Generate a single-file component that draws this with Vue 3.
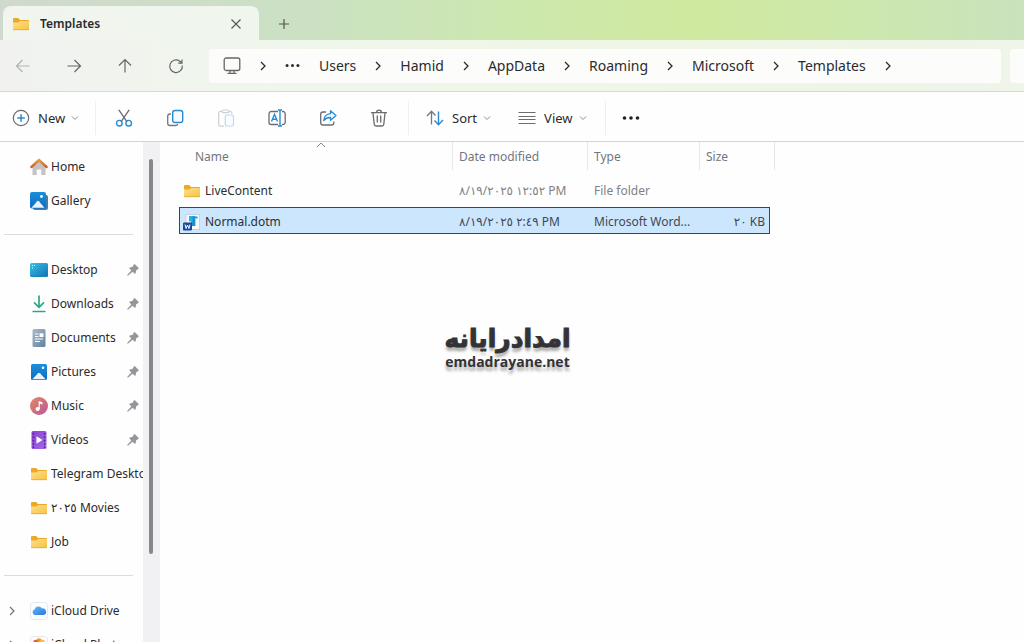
<script setup>
import { ref } from 'vue'

const crumbs = ['Users', 'Hamid', 'AppData', 'Roaming', 'Microsoft', 'Templates']

const groups = [
  [
    { name: 'Home', icon: 'home' },
    { name: 'Gallery', icon: 'gallery' },
  ],
  [
    { name: 'Desktop', icon: 'desktop', pinned: true },
    { name: 'Downloads', icon: 'downloads', pinned: true },
    { name: 'Documents', icon: 'documents', pinned: true },
    { name: 'Pictures', icon: 'pictures', pinned: true },
    { name: 'Music', icon: 'music', pinned: true },
    { name: 'Videos', icon: 'videos', pinned: true },
    { name: 'Telegram Desktop', icon: 'folder' },
    { name: '٢٠٢٥ Movies', icon: 'folder' },
    { name: 'Job', icon: 'folder' },
  ],
  [
    { name: 'iCloud Drive', icon: 'icloud', expandable: true },
    { name: 'iCloud Photos', icon: 'photos', expandable: true },
  ],
]

const files = [
  { name: 'LiveContent', icon: 'folder', date: '٨/١٩/٢٠٢٥ ١٢:٥٢ PM', type: 'File folder', size: '' },
  { name: 'Normal.dotm', icon: 'word', date: '٨/١٩/٢٠٢٥ ٢:٤٩ PM', type: 'Microsoft Word...', size: '٢٠ KB' },
]

const actions = [
  { name: 'Cut', icon: 'cut' },
  { name: 'Copy', icon: 'copy' },
  { name: 'Paste', icon: 'paste', disabled: true },
  { name: 'Rename', icon: 'rename' },
  { name: 'Share', icon: 'share' },
  { name: 'Delete', icon: 'delete' },
]

const selected = ref('Normal.dotm')
</script>

<template>
  <div class="window">
    <svg class="sprite" aria-hidden="true">
      <defs>
        <linearGradient id="g-folder" x1="0" y1="0" x2="1" y2="1">
          <stop offset="0" stop-color="#ffe08a" /><stop offset="1" stop-color="#f6c243" />
        </linearGradient>
        <linearGradient id="g-blue" x1="0" y1="0" x2="0" y2="1">
          <stop offset="0" stop-color="#1b8fdc" /><stop offset="1" stop-color="#0f6cbd" />
        </linearGradient>
        <linearGradient id="g-desk" x1="0" y1="0" x2="1" y2="1">
          <stop offset="0" stop-color="#35c3e0" /><stop offset="1" stop-color="#1270bb" />
        </linearGradient>
        <linearGradient id="g-doc" x1="0" y1="0" x2="1" y2="1">
          <stop offset="0" stop-color="#a9bccd" /><stop offset="1" stop-color="#64809e" />
        </linearGradient>
        <linearGradient id="g-music" x1="0" y1="0" x2="1" y2="1">
          <stop offset="0" stop-color="#e5885f" /><stop offset="1" stop-color="#b9579b" />
        </linearGradient>
        <linearGradient id="g-video" x1="0" y1="0" x2="1" y2="1">
          <stop offset="0" stop-color="#8b45cf" /><stop offset="1" stop-color="#a566ea" />
        </linearGradient>
        <linearGradient id="g-roof" x1="0" y1="0" x2="0" y2="1">
          <stop offset="0" stop-color="#ec9a3c" /><stop offset="1" stop-color="#c8652a" />
        </linearGradient>
        <linearGradient id="g-cloud" x1="0" y1="0" x2="1" y2="1">
          <stop offset="0" stop-color="#62b8f6" /><stop offset="1" stop-color="#2a78e6" />
        </linearGradient>
      </defs>
      <symbol id="i-folder" viewBox="0 0 18 18">
        <path d="M1 4.200c0-.8.5-1.200 1.200-1.200h4l1.800 2h8c.7 0 1 .4 1 1V14c0 .7-.4 1-1 1H2c-.7 0-1-.4-1-1z" fill="#eba92c" />
        <path d="M1 7.500h5.500l1.600-1.500H17v8c0 .7-.4 1-1 1H2c-.7 0-1-.4-1-1z" fill="url(#g-folder)" />
        <path d="M1.300 14.700h15.400" stroke="#dfa52d" stroke-width=".7" />
      </symbol>
      <symbol id="i-home" viewBox="0 0 18 18">
        <path d="M2.500 7.500 9 2.500l6.500 5V17h-4.200v-5.500H6.700V17H2.500z" fill="#c4c1c7" />
        <path d="M1.400 9 9 2l7.600 7" fill="none" stroke="url(#g-roof)" stroke-width="2.400" stroke-linecap="round" stroke-linejoin="round" />
      </symbol>
      <symbol id="i-gallery" viewBox="0 0 18 18">
        <rect x="3" y="3" width="15" height="15" rx="2" fill="#3d7faf" />
        <rect x="0" y="0" width="16" height="16.500" rx="2" fill="url(#g-blue)" />
        <path d="m1.500 15.800 5.700-6.600q.8-.8 1.600 0l5.700 6.600z" fill="#e8f5ff" />
        <circle cx="11.500" cy="4.500" r="1.400" fill="#fff" />
      </symbol>
      <symbol id="i-desktop" viewBox="0 0 18 18">
        <rect x="0" y="2" width="18" height="14" rx="1.500" fill="url(#g-desk)" />
        <path d="M2 4.500h1M2 7h1M4 4.500h1" stroke="#d9fbff" stroke-width="1.200" />
        <path d="M1 15.200h16" stroke="#1787a8" stroke-width="1" />
      </symbol>
      <symbol id="i-downloads" viewBox="0 0 18 18">
        <path d="M9 1v11M4.500 7.800 9 12.300l4.500-4.500M3.200 16.500h11.600" fill="none" stroke="#2ba88a" stroke-width="1.700" stroke-linecap="round" stroke-linejoin="round" />
      </symbol>
      <symbol id="i-documents" viewBox="0 0 18 18">
        <rect x="2.500" y="0" width="13" height="18" rx="1.500" fill="url(#g-doc)" />
        <path d="M5 5h3.500M5 7.500h3.500M5 10h8M5 12.500h5" stroke="#fff" stroke-width="1.200" />
        <rect x="9.500" y="4.300" width="4" height="3.700" fill="#fff" />
      </symbol>
      <symbol id="i-pictures" viewBox="0 0 18 18">
        <rect x="1" y="1" width="16" height="16" rx="1.500" fill="url(#g-blue)" />
        <path d="m2.300 16.200 5.800-6q.9-.8 1.800 0l5.800 6z" fill="#e8f5ff" />
        <circle cx="13" cy="4.800" r="1.300" fill="#fff" />
      </symbol>
      <symbol id="i-music" viewBox="0 0 18 18">
        <circle cx="9" cy="9" r="9" fill="url(#g-music)" />
        <circle cx="7.600" cy="12" r="2.100" fill="#fff" />
        <path d="M8.600 12V4l3.800 1.300v2.200L9.800 6.600V12z" fill="#fff" />
      </symbol>
      <symbol id="i-videos" viewBox="0 0 18 18">
        <rect x="1.500" y="0" width="15" height="18" rx="1.500" fill="url(#g-video)" />
        <path d="M3.400 2v15M14.600 2v15" stroke="#4a2383" stroke-width="1.500" stroke-dasharray="1.600 1.800" />
        <path d="M6.500 5.300v7.400L12.500 9z" fill="#fff" />
      </symbol>
      <symbol id="i-icloud" viewBox="0 0 18 18">
        <rect x=".5" y=".5" width="17" height="17" rx="3" fill="#fcfdff" stroke="#e5e8ef" />
        <path d="M5 13a2.900 2.900 0 0 1-.5-5.600A4.200 4.200 0 0 1 12 6.500a3.300 3.300 0 0 1 1.500 6.500z" fill="url(#g-cloud)" />
      </symbol>
      <symbol id="i-photos" viewBox="0 0 18 18">
        <rect x=".5" y=".5" width="17" height="17" rx="3" fill="#fcfdff" stroke="#e5e8ef" />
        <circle cx="9" cy="5" r="2.700" fill="#f59a23" /><circle cx="5.800" cy="6.500" r="2.700" fill="#ea5a4f" />
        <circle cx="12.200" cy="6.500" r="2.700" fill="#f3c42f" /><circle cx="5.500" cy="10.500" r="2.700" fill="#b06ad0" />
        <circle cx="12.500" cy="10.500" r="2.700" fill="#7cc04b" /><circle cx="9" cy="12.500" r="2.700" fill="#4a9de0" />
      </symbol>
      <symbol id="i-word" viewBox="0 0 18 18">
        <path d="M3 1.500h13.500v15H3z" fill="#f7fafc" stroke="#b6c6d4" stroke-width=".7" />
        <path d="M6 3h6v5.500H6z" fill="#27b2e6" /><path d="M9.500 3.500h5v2h-2V13H8V8.500h1.500z" fill="#1b8fd0" />
        <path d="M12.500 5v8" stroke="#8edcf5" stroke-width="1" />
        <rect x="0" y="9.500" width="9" height="8" rx="1.300" fill="#1c4697" />
        <path d="m2 11.500 1.100 4 1.400-3.500 1.400 3.500 1.100-4" fill="none" stroke="#fff" stroke-width="1" />
      </symbol>
      <symbol id="i-pin" viewBox="0 0 12 12">
        <path d="M6.800.6c.5-.5 1-.4 1.400 0l3.200 3.200c.4.400.4 1-.1 1.300L9.200 6.300l-.6 2.900c-.1.600-.7.700-1.100.3L5.600 7.700 1.200 11.600.3 11.700l.1-.9L4.300 6.400 2.500 4.500c-.4-.4-.3-1 .3-1.100l2.900-.6z" fill="#94969c" />
      </symbol>
      <symbol id="i-cut" viewBox="0 0 18 18">
        <path d="M4 1.200 11.700 12.400M14 1.200 6.300 12.400" fill="none" stroke="#6c6c70" stroke-width="1.300" stroke-linecap="round" />
        <circle cx="4.300" cy="14.200" r="2.800" fill="none" stroke="#2b8bd0" stroke-width="1.400" />
        <circle cx="13.700" cy="14.200" r="2.800" fill="none" stroke="#2b8bd0" stroke-width="1.400" />
      </symbol>
      <symbol id="i-copy" viewBox="0 0 18 18">
        <path d="M5 5H4a2.300 2.300 0 0 0-2.300 2.300v6.900a2.300 2.300 0 0 0 2.300 2.300h5.500c1.200 0 2-.7 2.200-1.700" fill="none" stroke="#77777b" stroke-width="1.300" />
        <rect x="6.700" y="1.500" width="10" height="12" rx="2.300" fill="#f5fbff" stroke="#2b8bd0" stroke-width="1.400" />
      </symbol>
      <symbol id="i-paste" viewBox="0 0 18 18">
        <path d="M5 2.500H3c-.8 0-1.300.5-1.300 1.300v12c0 .8.500 1.300 1.300 1.300h4M12 2.500h1.500c.8 0 1.300.5 1.300 1.300v1" fill="none" stroke="#cfcfd3" stroke-width="1.200" />
        <rect x="5" y="1" width="7" height="2.600" rx="1.300" fill="#fff" stroke="#cfcfd3" stroke-width="1.200" />
        <rect x="8.300" y="6" width="8.200" height="11" rx="1.500" fill="#fafdff" stroke="#bddaf0" stroke-width="1.200" />
      </symbol>
      <symbol id="i-rename" viewBox="0 0 18 18">
        <path d="M10 2.500H3.200A2.200 2.200 0 0 0 1 4.700v8.600a2.200 2.200 0 0 0 2.200 2.200H10M14 2.500h1A2.200 2.200 0 0 1 17.200 4.700v8.600A2.200 2.200 0 0 1 15 15.500h-1" fill="none" stroke="#6c6c70" stroke-width="1.300" />
        <path d="M12 1.500v15M10 1h4M10 17h4M3.500 12.500 6.500 5.300l3 7.200M4.500 10.200h4" fill="none" stroke="#2b8bd0" stroke-width="1.400" />
      </symbol>
      <symbol id="i-share" viewBox="0 0 18 18">
        <path d="M7 3H4a2.300 2.300 0 0 0-2.300 2.300v8.400A2.300 2.300 0 0 0 4 16h8.500a2.300 2.300 0 0 0 2.300-2.300v-1.200" fill="none" stroke="#6c6c70" stroke-width="1.300" />
        <path d="M11.500 1.700 17 6.500l-5.500 4.800V8.500c-3 0-5 .8-6.800 3 .4-3.800 2.800-6.400 6.800-6.800z" fill="#eef8ff" stroke="#2b8bd0" stroke-width="1.300" stroke-linejoin="round" />
      </symbol>
      <symbol id="i-delete" viewBox="0 0 18 18">
        <path d="M1.500 3.700h15M6.500 3.500C6.500 2 7.500 1.200 9 1.200s2.500.8 2.500 2.300M3 3.900l1.200 11.400c.1 1 .8 1.700 1.800 1.700h6c1 0 1.700-.7 1.800-1.700L15 3.900M7.300 7v6M10.700 7v6" fill="none" stroke="#6c6c70" stroke-width="1.300" stroke-linecap="round" />
      </symbol>
      <symbol id="i-new" viewBox="0 0 18 18">
        <circle cx="9" cy="9" r="7.700" fill="none" stroke="#6c6c70" stroke-width="1.200" />
        <path d="M9 5.200v7.600M5.200 9h7.600" stroke="#2b8bd0" stroke-width="1.500" />
      </symbol>
      <symbol id="i-sort" viewBox="0 0 18 18">
        <path d="M5.500 15.500v-13M1 7l4.500-4.700L9.500 6.500" fill="none" stroke="#77777b" stroke-width="1.300" />
        <path d="M12.500 2.500v13M8.500 11.500l4 4.200L17 11" fill="none" stroke="#2b8bd0" stroke-width="1.400" />
      </symbol>
      <symbol id="i-view" viewBox="0 0 18 18">
        <path d="M.5 3.500h17M.5 7.500h17M.5 10.500h17M.5 14.500h17" stroke="#6c6c70" stroke-width="1.100" />
      </symbol>
      <symbol id="i-back" viewBox="0 0 16 16">
        <path d="M14.500 8h-13M7.500 2l-6 6 6 6" fill="none" stroke="currentColor" stroke-width="1.200" />
      </symbol>
      <symbol id="i-forward" viewBox="0 0 16 16">
        <path d="M1.500 8h13M8.500 2l6 6-6 6" fill="none" stroke="currentColor" stroke-width="1.200" />
      </symbol>
      <symbol id="i-up" viewBox="0 0 16 16">
        <path d="M8 14.500v-13M2 7.500l6-6 6 6" fill="none" stroke="currentColor" stroke-width="1.200" />
      </symbol>
      <symbol id="i-refresh" viewBox="0 0 16 16">
        <path d="M14.300 7.500A6.300 6.300 0 1 1 11.500 3L14 5M14 1.500V5.200h-3.800" fill="none" stroke="currentColor" stroke-width="1.200" />
      </symbol>
      <symbol id="i-pc" viewBox="0 0 18 18">
        <rect x="1.200" y="1" width="15.600" height="12.500" rx="2" fill="none" stroke="#666" stroke-width="1.300" />
        <path d="M7 13.500v2.500M11 13.500v2.500M4.500 16.300h9" stroke="#666" stroke-width="1.200" />
      </symbol>
      <symbol id="i-right" viewBox="0 0 6 10">
        <path d="M1 1l4 4-4 4" fill="none" stroke="currentColor" stroke-width="1.300" />
      </symbol>
      <symbol id="i-down" viewBox="0 0 8 6">
        <path d="M1 1.500 4 4.500l3-3" fill="none" stroke="#8c8c8c" stroke-width="1" />
      </symbol>
      <symbol id="i-dots" viewBox="0 0 18 6">
        <circle cx="2.500" cy="3" r="1.800" fill="currentColor" /><circle cx="9" cy="3" r="1.800" fill="currentColor" /><circle cx="15.500" cy="3" r="1.800" fill="currentColor" />
      </symbol>
    </svg>

    <header class="tabs">
      <div class="tab">
        <svg class="ico"><use href="#i-folder" /></svg>
        <span class="tab-name">Templates</span>
        <button class="icon-btn" aria-label="Close tab">
          <svg viewBox="0 0 12 12" class="cross"><path d="M1.500 1.500l9 9M10.500 1.500l-9 9" stroke="#555" stroke-width="1.100" /></svg>
        </button>
      </div>
      <button class="icon-btn add" aria-label="New tab">
        <svg viewBox="0 0 12 12" class="cross"><path d="M6 1v10M1 6h10" stroke="#555" stroke-width="1.200" /></svg>
      </button>
    </header>

    <nav class="navbar" aria-label="Location">
      <div class="arrows">
        <button class="icon-btn faded" aria-label="Back" disabled><svg><use href="#i-back" /></svg></button>
        <button class="icon-btn" aria-label="Forward"><svg><use href="#i-forward" /></svg></button>
        <button class="icon-btn" aria-label="Up"><svg><use href="#i-up" /></svg></button>
        <button class="icon-btn" aria-label="Refresh"><svg><use href="#i-refresh" /></svg></button>
      </div>
      <div class="address">
        <svg class="ico"><use href="#i-pc" /></svg>
        <svg class="sep"><use href="#i-right" /></svg>
        <button class="icon-btn more-path" aria-label="More locations"><svg class="dots"><use href="#i-dots" /></svg></button>
        <template v-for="crumb in crumbs" :key="crumb">
          <a href="#" @click.prevent>{{ crumb }}</a>
          <svg class="sep"><use href="#i-right" /></svg>
        </template>
      </div>
      <input class="search" type="search" aria-label="Search Templates" />
    </nav>

    <div class="toolbar" role="toolbar" aria-label="File commands">
      <button class="cmd new"><svg class="ico"><use href="#i-new" /></svg><span>New</span><svg class="down"><use href="#i-down" /></svg></button>
      <div class="actions">
        <button v-for="a in actions" :key="a.name" class="icon-btn" :aria-label="a.name" :disabled="a.disabled">
          <svg class="ico"><use :href="'#i-' + a.icon" /></svg>
        </button>
      </div>
      <div class="arrange">
        <button class="cmd"><svg class="ico"><use href="#i-sort" /></svg><span>Sort</span><svg class="down"><use href="#i-down" /></svg></button>
        <button class="cmd"><svg class="ico"><use href="#i-view" /></svg><span>View</span><svg class="down"><use href="#i-down" /></svg></button>
      </div>
      <button class="icon-btn overflow" aria-label="See more"><svg class="dots"><use href="#i-dots" /></svg></button>
    </div>

    <div class="body">
      <aside class="sidebar">
        <ul v-for="(group, i) in groups" :key="i">
          <li v-for="item in group" :key="item.name">
            <a href="#" @click.prevent>
              <span class="twisty"><svg v-if="item.expandable" class="sep"><use href="#i-right" /></svg></span>
              <svg class="ico"><use :href="'#i-' + item.icon" /></svg>
              <span class="place"><bdo dir="ltr">{{ item.name }}</bdo></span>
              <svg v-if="item.pinned" class="pin"><use href="#i-pin" /></svg>
            </a>
          </li>
        </ul>
      </aside>
      <div class="scroll"><div class="thumb"></div></div>

      <main>
        <table>
          <thead>
            <tr>
              <th scope="col" class="col-name">Name
                <svg class="caret" viewBox="0 0 10 6"><path d="M1 5l4-4 4 4" fill="none" stroke="#888" stroke-width="1" /></svg>
              </th>
              <th scope="col">Date modified</th>
              <th scope="col">Type</th>
              <th scope="col">Size</th>
            </tr>
          </thead>
          <tbody>
            <tr v-for="f in files" :key="f.name" :class="{ selected: selected === f.name }" @click="selected = f.name">
              <td class="file"><svg class="ico"><use :href="'#i-' + f.icon" /></svg><span>{{ f.name }}</span></td>
              <td><bdo dir="ltr">{{ f.date }}</bdo></td>
              <td>{{ f.type }}</td>
              <td class="size"><bdo dir="ltr">{{ f.size }}</bdo></td>
            </tr>
          </tbody>
        </table>
      </main>
    </div>

    <div class="watermark">
      <span class="brand" lang="fa" dir="rtl">امدادرایانه</span>
      <span class="site">emdadrayane.net</span>
    </div>
  </div>
</template>

<style>
body {
  overflow: hidden;
}
</style>

<style scoped>
.window {
  position: relative;
  display: flex;
  flex-direction: column;
  height: 100vh;
  overflow: hidden;
  background: #fefefe;
  color: #2b2b2d;
  font: 12px/20px "Noto Sans", "DejaVu Sans", sans-serif;
}
.sprite {
  position: absolute;
  width: 0;
  height: 0;
}
svg {
  flex: none;
}
a {
  color: inherit;
  text-decoration: none;
}
button {
  display: flex;
  align-items: center;
  border: 0;
  padding: 0;
  background: none;
  color: inherit;
  font: inherit;
}
.ico {
  width: 18px;
  height: 18px;
}
.icon-btn {
  justify-content: center;
}
.sep {
  width: 6px;
  height: 10px;
}
.down {
  width: 8px;
  height: 6px;
}
.dots {
  width: 18px;
  height: 6px;
}
.cross {
  width: 12px;
  height: 12px;
}

.tabs {
  display: flex;
  height: 40px;
  box-sizing: border-box;
  padding: 6px 0 0 3px;
  background: linear-gradient(90deg, #d0d9cd, #cbe1c3 30%, #cde8ac 52%, #cfe99e 68%, #cde8ab 82%, #cae2bd);
}
.tab {
  display: flex;
  align-items: center;
  width: 256px;
  box-sizing: border-box;
  padding: 1px 17px 0 9px;
  border-radius: 8px 8px 0 0;
  background: linear-gradient(90deg, #f1f4ef, #eff6ec);
}
.tab-name {
  flex: 1;
  margin-left: 10px;
  font-weight: 600;
}
.add {
  margin-left: 19px;
  padding-top: 1px;
}

.navbar {
  display: flex;
  align-items: center;
  height: 52px;
  box-sizing: border-box;
  border-bottom: 1px solid #d5dcc2;
  background: linear-gradient(90deg, #f1f2f0, #eff7eb 30%, #eff6e5 65%, #eef5e9);
}
.arrows {
  display: flex;
  gap: 35px;
  padding: 0 25px 0 15px;
  color: #666;
}
.arrows svg {
  width: 16px;
  height: 16px;
}
.arrows .faded {
  color: #b1b3b0;
}
.address {
  display: flex;
  flex: 1;
  align-items: center;
  gap: 19px;
  height: 34px;
  margin-right: 9px;
  padding-left: 14px;
  border-radius: 4px;
  background: #fcfdfb;
  font-size: 14px;
}
.more-path .dots {
  width: 15px;
  height: 5px;
}
.search {
  width: 14px;
  height: 34px;
  box-sizing: border-box;
  border: 0;
  border-radius: 4px 0 0 4px;
  background: #fcfdfb;
}

.toolbar {
  display: flex;
  align-items: center;
  height: 50px;
  box-sizing: border-box;
  padding-top: 2px;
  border-bottom: 1px solid #d5d6c6;
  background: #fefefe;
  font-size: 13px;
}
.cmd span {
  margin: 0 6px 0 8px;
}
.new {
  width: 96px;
  height: 34px;
  padding-left: 12px;
  box-sizing: border-box;
  border-right: 1px solid #efeff1;
}
.actions {
  display: flex;
  gap: 33px;
  padding: 8px 20px 8px 19px;
  border-right: 1px solid #efeff1;
}
.arrange {
  display: flex;
  gap: 27px;
  padding: 7px 18px 7px 17px;
  border-right: 1px solid #efeff1;
}
.overflow {
  margin-left: 16px;
  color: #222;
}

.body {
  display: flex;
  flex: 1;
  min-height: 0;
}
.sidebar {
  width: 143px;
  overflow: hidden;
  padding-top: 8px;
  box-sizing: border-box;
}
ul {
  margin: 0;
  padding: 0;
  list-style: none;
}
ul + ul::before {
  content: "";
  display: block;
  height: 1px;
  margin: 16px 10px 18px 4px;
  background: #dcdbe0;
}
.sidebar a {
  display: flex;
  align-items: center;
  height: 34px;
}
.twisty {
  display: flex;
  flex: none;
  width: 21px;
  padding-left: 9px;
  color: #777;
}
.place {
  flex: 1;
  margin-left: 3px;
  white-space: nowrap;
}
.pin {
  width: 12px;
  height: 12px;
  margin-right: 4px;
}
.scroll {
  width: 17px;
  box-sizing: border-box;
  padding: 17px 7px 88px 6px;
  background: #f1f0f2;
}
.thumb {
  height: 100%;
  border-radius: 2px;
  background: #88878a;
}

main {
  flex: 1;
  min-width: 0;
  padding-left: 19px;
}
table,
thead,
tbody {
  display: block;
}
tr {
  display: grid;
  grid-template-columns: 274px 135px 112px 75px;
  width: max-content;
}
th {
  padding: 5px 0 3px 6px;
  border-right: 1px solid #e7e7ea;
  color: #727680;
  font-weight: 400;
  text-align: left;
}
.col-name {
  position: relative;
  padding-left: 16px;
}
.caret {
  position: absolute;
  top: 0;
  left: 137px;
  width: 10px;
  height: 6px;
}
tbody {
  padding-top: 2px;
}
tbody tr {
  grid-template-columns: 273px 135px 112px 69px;
  margin-top: 4px;
  border: 1px solid transparent;
  color: #808188;
}
tbody tr.selected {
  border-color: #3c4450;
  background: #cce6fe;
  color: #3f4955;
}
td {
  height: 20px;
  padding: 4px 0 1px 6px;
}
td.file {
  display: flex;
  align-items: center;
  padding-left: 3px;
  color: #2b2f35;
}
.file span {
  margin-left: 4px;
}
td.size {
  padding-right: 4px;
  text-align: right;
}

.watermark {
  position: absolute;
  top: 50%;
  left: 444px;
  display: flex;
  flex-direction: column;
  width: 127px;
  align-items: center;
  color: #333336;
  text-shadow: 0 4px 3px #0005;
}
.brand {
  padding-top: 4px;
  font: 700 25px/28px "DejaVu Sans", sans-serif;
  -webkit-text-stroke: 1px #333336;
}
.site {
  font: 700 14px/18px "Open Sans", sans-serif;
}
</style>
